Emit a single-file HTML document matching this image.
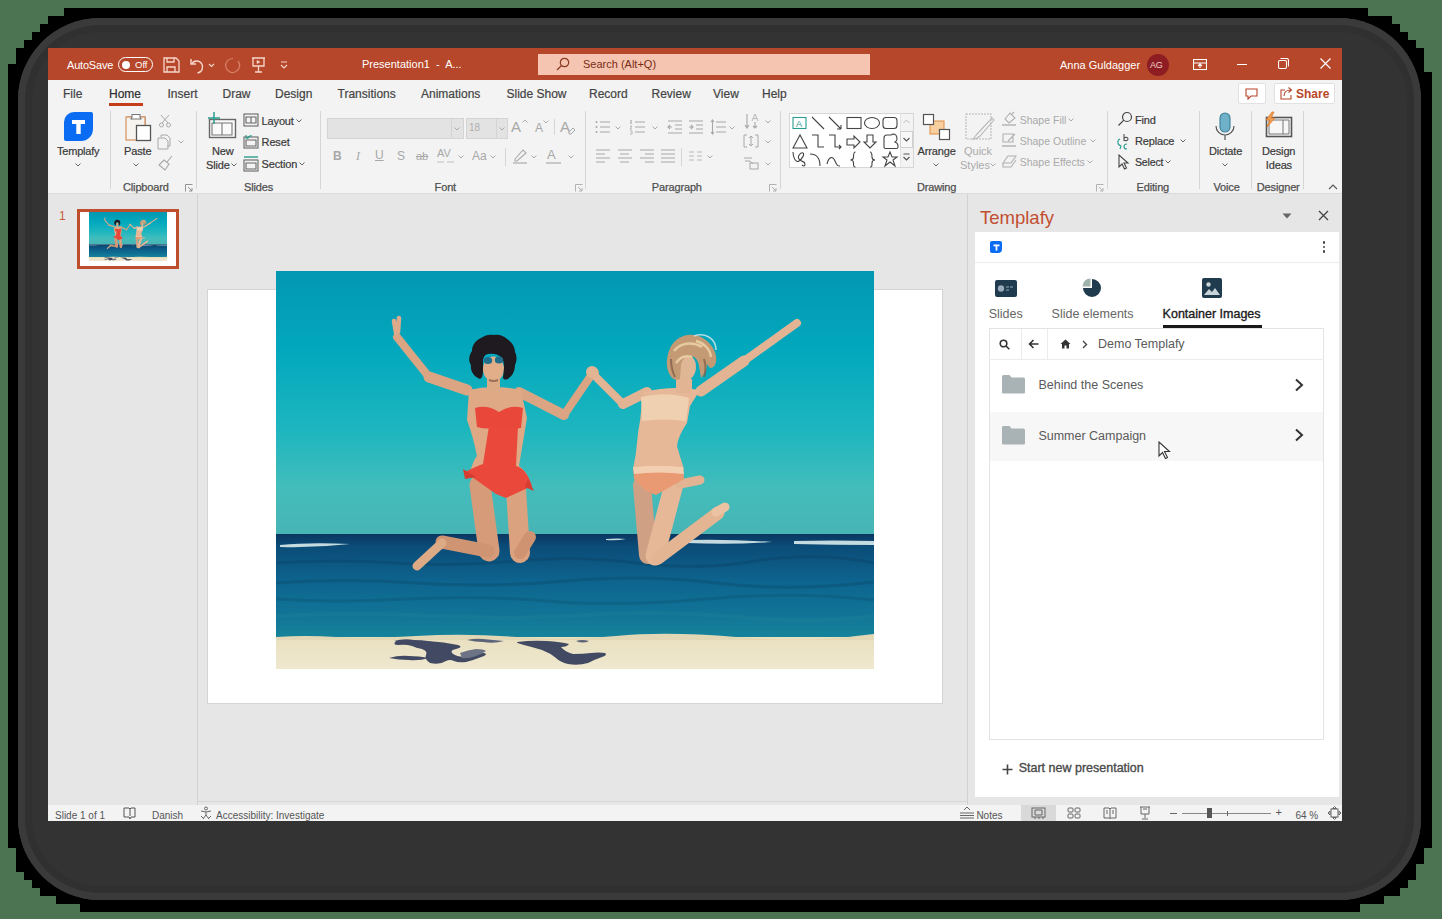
<!DOCTYPE html>
<html><head><meta charset="utf-8">
<style>
*{margin:0;padding:0;box-sizing:border-box}
html,body{width:1442px;height:919px;overflow:hidden;background:#4c7452;font-family:"Liberation Sans",sans-serif}
.a{position:absolute}
.t{position:absolute;white-space:nowrap;line-height:1}
#shadow{position:absolute;left:0;top:0}
#bezel{position:absolute;left:18px;top:18px;width:1403px;height:882px;border-radius:82px;background:#333;box-shadow:inset 0 0 0 7px #3a3a3a,inset 0 0 0 14px #303030}
#win{position:absolute;left:48px;top:48px;width:1294px;height:773px;background:#e6e6e6;overflow:hidden}
#title{position:absolute;left:0;top:0;width:1294px;height:32px;background:#b7472a}
#tabs{position:absolute;left:0;top:32px;width:1294px;height:28px;background:#f3f3f3}
#ribbon{position:absolute;left:0;top:60px;width:1294px;height:86px;background:#f3f3f3;border-bottom:1px solid #dadada}
.tab{color:#444;font-size:12px;-webkit-text-stroke:0.2px #444}
.rl{color:#3a3a3a;font-size:11px;letter-spacing:-0.15px;-webkit-text-stroke:0.2px #3a3a3a}
.gl{color:#505050;font-size:11px;letter-spacing:-0.15px;-webkit-text-stroke:0.25px #505050}
.sep{position:absolute;width:1px;background:#d6d6d6}
</style></head>
<body>
<svg id="shadow" width="1442" height="919"><polygon fill="#000" points="8,64 16,64 16,48 24,48 24,40 32,40 32,32 40,32 40,24 48,24 48,16 64,16 64,8 1368,8 1368,16 1392,16 1392,24 1400,24 1400,32 1408,32 1408,40 1416,40 1416,48 1424,48 1424,72 1432,72 1432,848 1424,848 1424,864 1416,864 1416,880 1408,880 1408,888 1400,888 1400,896 1384,896 1384,904 1360,904 1360,912 80,912 80,904 56,904 56,896 40,896 40,888 32,888 32,880 24,880 24,872 16,872 16,848 8,848"/></svg>
<div id="bezel"></div>
<div id="win">
  <div id="title">
    <div class="t" style="left:19px;top:12px;font-size:11px;color:#fff;letter-spacing:-0.2px">AutoSave</div>
    <div class="a" style="left:70px;top:9px;width:35px;height:15px;border:1.2px solid #fff;border-radius:8px"></div>
    <div class="a" style="left:74px;top:12.5px;width:8px;height:8px;border-radius:50%;background:#fff"></div>
    <div class="t" style="left:87px;top:12px;font-size:9.5px;color:#fff">Off</div>
    <svg class="a" style="left:114px;top:9px" width="18" height="16" viewBox="0 0 18 16" fill="none" stroke="#f6d7cc" stroke-width="1.3"><path d="M2 1h12l3 3v11H2z"/><path d="M5 1v4h7V1"/><path d="M5 15v-5h8v5"/></svg>
    <svg class="a" style="left:141px;top:8px" width="28" height="18" viewBox="0 0 28 18" fill="none" stroke="#f6d7cc" stroke-width="1.4"><path d="M2 3v5h5"/><path d="M2.5 8a6 6 0 1 1 6 9"/><path d="M20 8l2.5 2.5L25 8" stroke-width="1.1"/></svg>
    <svg class="a" style="left:176px;top:9px" width="17" height="17" viewBox="0 0 17 17" fill="none" stroke="#d9806a" stroke-width="1.2"><path d="M14 4a7 7 0 1 1-5-2.5"/></svg>
    <svg class="a" style="left:203px;top:9px" width="15" height="16" viewBox="0 0 15 16" fill="none" stroke="#f6d7cc" stroke-width="1.3"><path d="M1 1h13M2 1v8h11V1M7.5 9v6M4 15h7"/><path d="M6 3.5l3 1.5-3 1.5z" fill="#f6d7cc" stroke-width="0.6"/></svg>
    <svg class="a" style="left:232px;top:13px" width="8" height="8" viewBox="0 0 8 8" fill="none" stroke="#f6d7cc" stroke-width="1.1"><path d="M1 1h6M1 4l3 3 3-3"/></svg>
    <div class="t" style="left:314px;top:11px;font-size:11px;color:#fff">Presentation1&nbsp; -&nbsp; A...</div>
    <div class="a" style="left:490px;top:6px;width:332px;height:21px;background:#f5c5b1"></div>
    <svg class="a" style="left:508px;top:9px" width="14" height="14" viewBox="0 0 14 14" fill="none" stroke="#8a3a22" stroke-width="1.2"><circle cx="8.5" cy="5.5" r="4.2"/><path d="M5.5 8.5L1 13"/></svg>
    <div class="t" style="left:535px;top:11px;font-size:11px;color:#7a2c16">Search (Alt+Q)</div>
    <div class="t" style="left:1012px;top:12px;font-size:11px;color:#fff">Anna Guldagger</div>
    <div class="a" style="left:1099px;top:6px;width:22px;height:22px;border-radius:50%;background:#8d1d22"></div>
    <div class="t" style="left:1102px;top:13px;font-size:9px;color:#f0d0d0;letter-spacing:-0.3px">AG</div>
    <svg class="a" style="left:1145px;top:11px" width="14" height="12" viewBox="0 0 14 12" fill="none" stroke="#fff" stroke-width="1.1"><rect x="0.5" y="0.5" width="13" height="10"/><path d="M0.5 4h13M7 9V5M5 7l2-2 2 2"/></svg>
    <div class="a" style="left:1189px;top:16px;width:10px;height:1px;background:#fff"></div>
    <svg class="a" style="left:1230px;top:10px" width="11" height="11" viewBox="0 0 11 11" fill="none" stroke="#fff" stroke-width="1.1"><rect x="0.5" y="2.5" width="8" height="8" rx="1.5"/><path d="M2.5 0.5h6a2 2 0 0 1 2 2v6"/></svg>
    <svg class="a" style="left:1272px;top:10px" width="11" height="11" viewBox="0 0 11 11" fill="none" stroke="#fff" stroke-width="1.2"><path d="M0.5 0.5l10 10M10.5 0.5l-10 10"/></svg>
  </div>
  <div id="tabs">
    <div class="t tab" style="left:15px;top:7.5px">File</div>
    <div class="t tab" style="left:61px;top:7.5px;color:#262626">Home</div>
    <div class="t tab" style="left:119.5px;top:7.5px">Insert</div>
    <div class="t tab" style="left:174.5px;top:7.5px">Draw</div>
    <div class="t tab" style="left:227px;top:7.5px">Design</div>
    <div class="t tab" style="left:289.5px;top:7.5px">Transitions</div>
    <div class="t tab" style="left:373px;top:7.5px">Animations</div>
    <div class="t tab" style="left:458.5px;top:7.5px">Slide Show</div>
    <div class="t tab" style="left:541px;top:7.5px">Record</div>
    <div class="t tab" style="left:603.5px;top:7.5px">Review</div>
    <div class="t tab" style="left:665px;top:7.5px">View</div>
    <div class="t tab" style="left:714px;top:7.5px">Help</div>
    <div class="a" style="left:61px;top:23px;width:34px;height:2.5px;background:#c43e1c"></div>
    <div class="a" style="left:1190px;top:3px;width:28px;height:21px;background:#fff;border:1px solid #e1e1e1;border-radius:2px"></div>
    <svg class="a" style="left:1197px;top:8px" width="13" height="12" viewBox="0 0 13 12" fill="none" stroke="#b7472a" stroke-width="1.1"><path d="M1 1h11v7H6l-3 3V8H1z"/></svg>
    <div class="a" style="left:1226px;top:3px;width:61px;height:21px;background:#fff;border:1px solid #e1e1e1;border-radius:2px"></div>
    <svg class="a" style="left:1232px;top:7px" width="13" height="13" viewBox="0 0 13 13" fill="none" stroke="#b7472a" stroke-width="1.1"><path d="M5 3H1v9h10V8"/><path d="M4 9c0-4 3-6 7-6M8.5 0.5L11.5 3 8.5 5.5"/></svg>
    <div class="t" style="left:1248px;top:7.5px;font-size:12px;color:#b7472a;font-weight:bold">Share</div>
  </div>
  <div id="ribbon"></div>
</div>
<div id="ov" class="a" style="left:0;top:0;width:1442px;height:919px">
<!-- Templafy -->
<div class="a" style="left:64px;top:112px;width:29px;height:29px;background:#0a6cf2;border-radius:10px 2px 12px 2px"></div>
<svg class="a" style="left:70px;top:118px" width="17" height="17" viewBox="0 0 17 17"><path d="M2 2h13v4h-4.3v10H6.3V6H2z" fill="#fff"/></svg>
<div class="t rl" style="left:57px;top:145.6px;letter-spacing:-0.2px">Templafy</div>
<svg class="a" style="left:75px;top:163px" width="6" height="4" viewBox="0 0 6 4" fill="none" stroke="#666" stroke-width="1"><path d="M0.5 0.5l2.5 2.5 2.5-2.5"/></svg>
<div class="sep" style="left:110px;top:111px;height:78px"></div>
<!-- Clipboard -->
<svg class="a" style="left:124px;top:113px" width="29" height="29" viewBox="0 0 29 29" fill="none"><path d="M3 4h6M15 4h6v8" stroke="#777" stroke-width="1.2"/><rect x="2" y="4" width="19" height="23" fill="#f7f3ef" stroke="#d8925c" stroke-width="1.2"/><path d="M8 4V1.5h8V4l1 2H7z" fill="#fff" stroke="#777" stroke-width="1.1"/><rect x="12.5" y="12.5" width="14" height="15" fill="#fff" stroke="#555" stroke-width="1.3"/></svg>
<div class="t rl" style="left:124px;top:145.6px">Paste</div>
<svg class="a" style="left:133px;top:163px" width="6" height="4" viewBox="0 0 6 4" fill="none" stroke="#666" stroke-width="1"><path d="M0.5 0.5l2.5 2.5 2.5-2.5"/></svg>
<svg class="a" style="left:159px;top:114px" width="12" height="14" viewBox="0 0 12 14" fill="none" stroke="#a8a8a8" stroke-width="1"><path d="M2 1l7 8M10 1L3 9"/><circle cx="2.5" cy="11" r="2"/><circle cx="9.5" cy="11" r="2"/></svg>
<svg class="a" style="left:157px;top:134px" width="16" height="16" viewBox="0 0 16 16" fill="none" stroke="#a8a8a8" stroke-width="1"><path d="M4 3V1h6l3 3v8h-3"/><path d="M1 4h7l3 3v8H1z"/></svg>
<svg class="a" style="left:178px;top:140px" width="6" height="4" viewBox="0 0 6 4" fill="none" stroke="#aaa" stroke-width="1"><path d="M0.5 0.5l2.5 2.5 2.5-2.5"/></svg>
<svg class="a" style="left:158px;top:155px" width="15" height="16" viewBox="0 0 15 16" fill="none" stroke="#a8a8a8" stroke-width="1.1"><path d="M9 7l5-6M6 5l5 4-4 6-6-5z"/></svg>
<div class="t gl" style="left:123px;top:181.6px">Clipboard</div>
<svg class="a" style="left:185px;top:184px" width="8" height="8" viewBox="0 0 8 8" fill="none" stroke="#888" stroke-width="0.9"><path d="M0.5 7.5V0.5h7M3 3l4 4M4 7h3V4"/></svg>
<div class="sep" style="left:196px;top:111px;height:78px"></div>
<!-- Slides -->
<svg class="a" style="left:207px;top:111px" width="30" height="28" viewBox="0 0 30 28" fill="none"><rect x="2.5" y="8.5" width="26" height="18" stroke="#666" stroke-width="1.4" fill="#fafafa"/><path d="M5 12h20v12H5z M15 12v12" stroke="#777" stroke-width="1.1"/><path d="M7 1v12M1 7h12" stroke="#2a9d8f" stroke-width="1.5"/></svg>
<div class="t rl" style="left:212px;top:146.2px">New</div>
<div class="t rl" style="left:206px;top:159.6px">Slide</div>
<svg class="a" style="left:231px;top:163px" width="6" height="4" viewBox="0 0 6 4" fill="none" stroke="#666" stroke-width="1"><path d="M0.5 0.5l2.5 2.5 2.5-2.5"/></svg>
<svg class="a" style="left:243px;top:113px" width="16" height="14" viewBox="0 0 16 14" fill="none" stroke="#666" stroke-width="1.1"><rect x="1" y="1" width="14" height="12"/><path d="M3 4h10v6H3zM8 4v6"/></svg>
<div class="t rl" style="left:261.6px;top:116px">Layout</div>
<svg class="a" style="left:296px;top:119px" width="6" height="4" viewBox="0 0 6 4" fill="none" stroke="#666" stroke-width="1"><path d="M0.5 0.5l2.5 2.5 2.5-2.5"/></svg>
<svg class="a" style="left:243px;top:134px" width="16" height="15" viewBox="0 0 16 15" fill="none" stroke="#666" stroke-width="1.1"><rect x="1" y="3" width="14" height="11"/><path d="M3 6h10v6H3z"/><path d="M4 5a4 4 0 0 1 5-3M3 1v3h3" stroke="#2a9d8f"/></svg>
<div class="t rl" style="left:261.6px;top:137.4px">Reset</div>
<svg class="a" style="left:243px;top:156px" width="16" height="16" viewBox="0 0 16 16" fill="none" stroke="#666" stroke-width="1.1"><path d="M1 1h14" stroke="#2a9d8f" stroke-width="1.4"/><rect x="1" y="4" width="14" height="11"/><path d="M3 7h10v6H3z"/></svg>
<div class="t rl" style="left:261.6px;top:158.6px">Section</div>
<svg class="a" style="left:299px;top:162px" width="6" height="4" viewBox="0 0 6 4" fill="none" stroke="#666" stroke-width="1"><path d="M0.5 0.5l2.5 2.5 2.5-2.5"/></svg>
<div class="t gl" style="left:244px;top:181.6px">Slides</div>
<div class="sep" style="left:320px;top:111px;height:78px"></div>
<!-- Font -->
<div class="a" style="left:327px;top:118px;width:137px;height:21px;background:#e3e3e3;border:1px solid #d4d4d4"></div>
<div class="a" style="left:451px;top:119px;width:1px;height:19px;background:#d4d4d4"></div>
<svg class="a" style="left:454px;top:127px" width="6" height="4" viewBox="0 0 6 4" fill="none" stroke="#aaa" stroke-width="1"><path d="M0.5 0.5l2.5 2.5 2.5-2.5"/></svg>
<div class="a" style="left:466px;top:118px;width:42px;height:21px;background:#e3e3e3;border:1px solid #d4d4d4"></div>
<div class="a" style="left:496px;top:119px;width:1px;height:19px;background:#d4d4d4"></div>
<div class="t" style="left:469px;top:123px;font-size:10px;color:#b0b0b0">18</div>
<svg class="a" style="left:499px;top:127px" width="6" height="4" viewBox="0 0 6 4" fill="none" stroke="#aaa" stroke-width="1"><path d="M0.5 0.5l2.5 2.5 2.5-2.5"/></svg>
<div class="t" style="left:511px;top:119px;font-size:15px;color:#a8a8a8">A</div>
<svg class="a" style="left:522px;top:119px" width="6" height="4" viewBox="0 0 6 4" fill="none" stroke="#aaa" stroke-width="0.9"><path d="M0.5 3.5l2.5-2.5 2.5 2.5"/></svg>
<div class="t" style="left:535px;top:122px;font-size:12px;color:#a8a8a8">A</div>
<svg class="a" style="left:543px;top:120px" width="6" height="4" viewBox="0 0 6 4" fill="none" stroke="#aaa" stroke-width="0.9"><path d="M0.5 0.5l2.5 2.5 2.5-2.5"/></svg>
<div class="sep" style="left:554px;top:119px;height:16px"></div>
<div class="t" style="left:560px;top:119px;font-size:15px;color:#a8a8a8">A</div>
<svg class="a" style="left:568px;top:127px" width="8" height="8" viewBox="0 0 8 8" fill="none" stroke="#aaa" stroke-width="1"><path d="M1 5l4-4 2 2-4 4H1z"/></svg>
<div class="t" style="left:333px;top:150px;font-size:12px;color:#a8a8a8;font-weight:bold">B</div>
<div class="t" style="left:356px;top:150px;font-size:12px;color:#a8a8a8;font-style:italic;font-family:'Liberation Serif',serif">I</div>
<div class="t" style="left:375px;top:149px;font-size:12px;color:#a8a8a8;text-decoration:underline">U</div>
<div class="t" style="left:397px;top:150px;font-size:12px;color:#a8a8a8">S</div>
<div class="t" style="left:416px;top:151px;font-size:11px;color:#a8a8a8;text-decoration:line-through">ab</div>
<div class="t" style="left:437px;top:148px;font-size:11px;color:#a8a8a8">AV</div>
<svg class="a" style="left:437px;top:160px" width="17" height="4" viewBox="0 0 17 4" fill="none" stroke="#aaa" stroke-width="0.7"><path d="M0 2h7M10 2h7"/></svg>
<svg class="a" style="left:458px;top:155px" width="6" height="4" viewBox="0 0 6 4" fill="none" stroke="#aaa" stroke-width="1"><path d="M0.5 0.5l2.5 2.5 2.5-2.5"/></svg>
<div class="t" style="left:472px;top:150px;font-size:12px;color:#a8a8a8">Aa</div>
<svg class="a" style="left:490px;top:155px" width="6" height="4" viewBox="0 0 6 4" fill="none" stroke="#aaa" stroke-width="1"><path d="M0.5 0.5l2.5 2.5 2.5-2.5"/></svg>
<div class="sep" style="left:505px;top:148px;height:18px"></div>
<svg class="a" style="left:512px;top:148px" width="16" height="16" viewBox="0 0 16 16" fill="none" stroke="#aaa" stroke-width="1.1"><path d="M3 11l8-9 3 3-9 8H3z"/><path d="M1 15h14" stroke-width="2" stroke="#c8c8c8"/></svg>
<svg class="a" style="left:531px;top:155px" width="6" height="4" viewBox="0 0 6 4" fill="none" stroke="#aaa" stroke-width="1"><path d="M0.5 0.5l2.5 2.5 2.5-2.5"/></svg>
<div class="t" style="left:547px;top:148px;font-size:13px;color:#a8a8a8">A</div>
<div class="a" style="left:546px;top:162px;width:15px;height:2px;background:#c8c8c8"></div>
<svg class="a" style="left:568px;top:155px" width="6" height="4" viewBox="0 0 6 4" fill="none" stroke="#aaa" stroke-width="1"><path d="M0.5 0.5l2.5 2.5 2.5-2.5"/></svg>
<div class="t gl" style="left:434.6px;top:181.6px">Font</div>
<svg class="a" style="left:575px;top:184px" width="8" height="8" viewBox="0 0 8 8" fill="none" stroke="#aaa" stroke-width="0.9"><path d="M0.5 7.5V0.5h7M3 3l4 4M4 7h3V4"/></svg>
<div class="sep" style="left:585px;top:111px;height:78px"></div>
<!-- Paragraph -->
<svg class="a" style="left:595px;top:119px" width="15" height="16" viewBox="0 0 15 16" fill="none" stroke="#a8a8a8" stroke-width="1.2"><path d="M5 3h10M5 8h10M5 13h10"/><circle cx="1.5" cy="3" r="1" fill="#a8a8a8" stroke="none"/><circle cx="1.5" cy="8" r="1" fill="#a8a8a8" stroke="none"/><circle cx="1.5" cy="13" r="1" fill="#a8a8a8" stroke="none"/></svg>
<svg class="a" style="left:615px;top:126px" width="6" height="4" viewBox="0 0 6 4" fill="none" stroke="#aaa" stroke-width="1"><path d="M0.5 0.5l2.5 2.5 2.5-2.5"/></svg>
<svg class="a" style="left:629px;top:119px" width="16" height="16" viewBox="0 0 16 16" fill="none" stroke="#a8a8a8" stroke-width="1.2"><path d="M6 3h10M6 8h10M6 13h10M2 1v4" /><path d="M1 7h2l-2 3h2M1 12h2v3H1" stroke-width="0.8"/></svg>
<svg class="a" style="left:652px;top:126px" width="6" height="4" viewBox="0 0 6 4" fill="none" stroke="#aaa" stroke-width="1"><path d="M0.5 0.5l2.5 2.5 2.5-2.5"/></svg>
<svg class="a" style="left:667px;top:119px" width="15" height="16" viewBox="0 0 15 16" fill="none" stroke="#a8a8a8" stroke-width="1.1"><path d="M1 2h14M8 6h7M8 10h7M1 14h14M5 8H1M3 6L1 8l2 2"/></svg>
<svg class="a" style="left:688px;top:119px" width="15" height="16" viewBox="0 0 15 16" fill="none" stroke="#a8a8a8" stroke-width="1.1"><path d="M1 2h14M8 6h7M8 10h7M1 14h14M1 8h4M3 6l2 2-2 2"/></svg>
<svg class="a" style="left:710px;top:119px" width="16" height="16" viewBox="0 0 16 16" fill="none" stroke="#a8a8a8" stroke-width="1.1"><path d="M6 3h10M6 8h10M6 13h10M2.5 1v14M1 3l1.5-2L4 3M1 13l1.5 2L4 13"/></svg>
<svg class="a" style="left:729px;top:126px" width="6" height="4" viewBox="0 0 6 4" fill="none" stroke="#aaa" stroke-width="1"><path d="M0.5 0.5l2.5 2.5 2.5-2.5"/></svg>
<svg class="a" style="left:744px;top:113px" width="16" height="16" viewBox="0 0 16 16" fill="none" stroke="#a8a8a8" stroke-width="1.1"><path d="M3 1v14M1 12l2 3 2-3M11 15V9M9 13l2 2 2-2"/><path d="M8 8l3-7 3 7M9 5.5h4" stroke-width="0.8"/></svg>
<svg class="a" style="left:765px;top:120px" width="6" height="4" viewBox="0 0 6 4" fill="none" stroke="#aaa" stroke-width="1"><path d="M0.5 0.5l2.5 2.5 2.5-2.5"/></svg>
<svg class="a" style="left:595px;top:148px" width="15" height="15" viewBox="0 0 15 15" fill="none" stroke="#a8a8a8" stroke-width="1.2"><path d="M1 2h14M1 6h9M1 10h14M1 14h9"/></svg>
<svg class="a" style="left:617px;top:148px" width="15" height="15" viewBox="0 0 15 15" fill="none" stroke="#a8a8a8" stroke-width="1.2"><path d="M1 2h14M3 6h9M1 10h14M3 14h9"/></svg>
<svg class="a" style="left:639px;top:148px" width="15" height="15" viewBox="0 0 15 15" fill="none" stroke="#a8a8a8" stroke-width="1.2"><path d="M1 2h14M6 6h9M1 10h14M6 14h9"/></svg>
<svg class="a" style="left:660px;top:148px" width="15" height="15" viewBox="0 0 15 15" fill="none" stroke="#a8a8a8" stroke-width="1.2"><path d="M1 2h14M1 6h14M1 10h14M1 14h14"/></svg>
<div class="sep" style="left:681px;top:148px;height:18px"></div>
<svg class="a" style="left:689px;top:151px" width="13" height="10" viewBox="0 0 13 10" fill="none" stroke="#b8b8b8" stroke-width="1"><path d="M0 1h5M8 1h5M0 5h5M8 5h5M0 9h5M8 9h5"/></svg>
<svg class="a" style="left:707px;top:155px" width="6" height="4" viewBox="0 0 6 4" fill="none" stroke="#aaa" stroke-width="1"><path d="M0.5 0.5l2.5 2.5 2.5-2.5"/></svg>
<svg class="a" style="left:743px;top:134px" width="16" height="14" viewBox="0 0 16 14" fill="none" stroke="#a8a8a8" stroke-width="1"><path d="M4 1H1v12h3M12 1h3v12h-3M8 2v10M6 4l2-2 2 2M6 10l2 2 2-2"/></svg>
<svg class="a" style="left:765px;top:140px" width="6" height="4" viewBox="0 0 6 4" fill="none" stroke="#aaa" stroke-width="1"><path d="M0.5 0.5l2.5 2.5 2.5-2.5"/></svg>
<svg class="a" style="left:743px;top:156px" width="16" height="14" viewBox="0 0 16 14" fill="none" stroke="#a8a8a8" stroke-width="1"><path d="M1 2h8M2 5h5l3 3"/><rect x="7" y="7" width="8" height="6"/></svg>
<svg class="a" style="left:765px;top:162px" width="6" height="4" viewBox="0 0 6 4" fill="none" stroke="#aaa" stroke-width="1"><path d="M0.5 0.5l2.5 2.5 2.5-2.5"/></svg>
<div class="t gl" style="left:651.8px;top:181.6px">Paragraph</div>
<svg class="a" style="left:769px;top:184px" width="8" height="8" viewBox="0 0 8 8" fill="none" stroke="#aaa" stroke-width="0.9"><path d="M0.5 7.5V0.5h7M3 3l4 4M4 7h3V4"/></svg>
<div class="sep" style="left:780px;top:111px;height:78px"></div>
<!-- Drawing -->
<div class="a" style="left:789px;top:113px;width:125px;height:55px;background:#fff;border:1px solid #d6d6d6"></div>
<div class="a" style="left:900px;top:114px;width:13px;height:53px;background:#f3f3f3;border-left:1px solid #e3e3e3"></div>
<div class="a" style="left:900px;top:131px;width:13px;height:17px;border:1px solid #d0d0d0;background:#f8f8f8"></div>
<svg class="a" style="left:790px;top:114px" width="110" height="54" viewBox="0 0 110 54" fill="none" stroke="#444" stroke-width="1.1">
<rect x="3" y="3.5" width="13" height="11" stroke="#2a9d8f"/><text x="6" y="13" font-size="9" font-family="Liberation Sans" fill="#2a9d8f" stroke="none">A</text>
<path d="M22 3l12 12M39 3l12 12M51 15v-4M51 15h-4"/>
<rect x="57" y="3.5" width="14" height="11"/><ellipse cx="82" cy="9" rx="7.5" ry="5.5"/><rect x="93" y="3.5" width="14" height="11" rx="3"/>
<path d="M3 34l7-13 7 13z"/><path d="M22 21h6v12h6M39 21h6v12h6M49 31l2 2-2 2"/><path d="M57 25h7v-3l6 6-6 6v-3h-7z"/><path d="M77 21h6v7h3l-6 6-6-6h3z"/><path d="M94 24q0-3 3-3h4l2-1q4 0 4 5 0 2-2 3 3 1 3 4v1q0 1.5-1.5 1.5h-11q-1.5 0-1.5-1.5z"/>
<path d="M3 38c0 6 3 11 6 9s6-7 4-8-6 3-4 6 6 2 6 5-2 2-3 1M20 40c6 0 10 4 10 12M37 50c2-8 6-8 8-3s3 5 5 5"/><path d="M65.5 38c-2 0-2 2-2 5s-2 3-3 3c1 0 3 0 3 3s0 4 2 4M80 38c2 0 2 2 2 5s2 3 3 3c-1 0-3 0-3 3s0 4-2 4"/><path d="M100 38l2 5h5l-4 3 2 6-5-4-5 4 2-6-4-3h5z"/>
</svg>
<svg class="a" style="left:903px;top:119px" width="7" height="5" viewBox="0 0 7 5" fill="none" stroke="#bbb" stroke-width="1"><path d="M0.5 4l3-3 3 3"/></svg>
<svg class="a" style="left:903px;top:137px" width="7" height="5" viewBox="0 0 7 5" fill="none" stroke="#555" stroke-width="1.1"><path d="M0.5 1l3 3 3-3"/></svg>
<svg class="a" style="left:903px;top:153px" width="7" height="9" viewBox="0 0 7 9" fill="none" stroke="#555" stroke-width="1.1"><path d="M0.5 1h6M0.5 4l3 3 3-3"/></svg>
<svg class="a" style="left:922px;top:113px" width="30" height="28" viewBox="0 0 30 28" fill="none"><rect x="8" y="8" width="14" height="13" fill="#f8cf9e" stroke="#e09650" stroke-width="1.1"/><rect x="1.5" y="1.5" width="10" height="10" fill="#fff" stroke="#555" stroke-width="1.2"/><rect x="17.5" y="16.5" width="10" height="10" fill="#fff" stroke="#555" stroke-width="1.2"/></svg>
<div class="t rl" style="left:917.6px;top:145.6px">Arrange</div>
<svg class="a" style="left:933px;top:163px" width="6" height="4" viewBox="0 0 6 4" fill="none" stroke="#666" stroke-width="1"><path d="M0.5 0.5l2.5 2.5 2.5-2.5"/></svg>
<svg class="a" style="left:964px;top:112px" width="32" height="30" viewBox="0 0 32 30" fill="none" stroke="#b8b8b8" stroke-width="1.1"><path d="M2 2h25v25H2z" stroke-dasharray="2 1"/><path d="M30 8L16 24c-2 2-5 3-7 3 2-2 3-4 5-6L28 6z"/></svg>
<div class="t" style="left:964px;top:145.6px;font-size:11px;color:#aaa">Quick</div>
<div class="t" style="left:960px;top:159.6px;font-size:11px;color:#aaa">Styles</div>
<svg class="a" style="left:990px;top:163px" width="6" height="4" viewBox="0 0 6 4" fill="none" stroke="#aaa" stroke-width="1"><path d="M0.5 0.5l2.5 2.5 2.5-2.5"/></svg>
<svg class="a" style="left:1001px;top:111px" width="16" height="16" viewBox="0 0 16 16" fill="none" stroke="#b0b0b0" stroke-width="1.1"><path d="M4 8l5-6 5 5-6 5z M11 3l2-2"/><path d="M1 14h14" stroke-width="2" stroke="#c4c4c4"/></svg>
<div class="t" style="left:1019.7px;top:115px;font-size:10.5px;color:#aaa">Shape Fill</div>
<svg class="a" style="left:1068px;top:118px" width="6" height="4" viewBox="0 0 6 4" fill="none" stroke="#aaa" stroke-width="1"><path d="M0.5 0.5l2.5 2.5 2.5-2.5"/></svg>
<svg class="a" style="left:1001px;top:132px" width="16" height="16" viewBox="0 0 16 16" fill="none" stroke="#b0b0b0" stroke-width="1.1"><path d="M2 2h10v8H2z M7 9l7-7"/><path d="M1 14h14" stroke-width="2" stroke="#c4c4c4"/></svg>
<div class="t" style="left:1019.7px;top:136px;font-size:10.5px;color:#aaa">Shape Outline</div>
<svg class="a" style="left:1090px;top:139px" width="6" height="4" viewBox="0 0 6 4" fill="none" stroke="#aaa" stroke-width="1"><path d="M0.5 0.5l2.5 2.5 2.5-2.5"/></svg>
<svg class="a" style="left:1001px;top:154px" width="16" height="15" viewBox="0 0 16 15" fill="none" stroke="#b0b0b0" stroke-width="1.1"><path d="M2 9l5-7h8l-5 7z M2 9v4h8l5-7"/></svg>
<div class="t" style="left:1019.7px;top:157px;font-size:10.5px;color:#aaa">Shape Effects</div>
<svg class="a" style="left:1087px;top:160px" width="6" height="4" viewBox="0 0 6 4" fill="none" stroke="#aaa" stroke-width="1"><path d="M0.5 0.5l2.5 2.5 2.5-2.5"/></svg>
<div class="t gl" style="left:917px;top:181.6px">Drawing</div>
<svg class="a" style="left:1096px;top:184px" width="8" height="8" viewBox="0 0 8 8" fill="none" stroke="#aaa" stroke-width="0.9"><path d="M0.5 7.5V0.5h7M3 3l4 4M4 7h3V4"/></svg>
<div class="sep" style="left:1107px;top:111px;height:78px"></div>
<!-- Editing -->
<svg class="a" style="left:1117px;top:111px" width="16" height="16" viewBox="0 0 16 16" fill="none" stroke="#444" stroke-width="1.2"><circle cx="10" cy="6" r="4.5"/><path d="M6.8 9.2L1.5 14.5"/></svg>
<div class="t rl" style="left:1135px;top:114.6px">Find</div>
<svg class="a" style="left:1116px;top:133px" width="16" height="17" viewBox="0 0 16 17" fill="none" stroke="#2a9d8f" stroke-width="1.1"><path d="M4 6c-3 1-3 6 1 7M2 11l3 2-1 3M11 11c-2 0-3 1-3 3s1 2 3 2"/><path d="M8 1v7M8 5c1-1 4-1 4 1s-3 2-4 1" stroke="#555"/></svg>
<div class="t rl" style="left:1135px;top:135.6px">Replace</div>
<svg class="a" style="left:1180px;top:139px" width="6" height="4" viewBox="0 0 6 4" fill="none" stroke="#666" stroke-width="1"><path d="M0.5 0.5l2.5 2.5 2.5-2.5"/></svg>
<svg class="a" style="left:1118px;top:154px" width="12" height="16" viewBox="0 0 12 16" fill="none" stroke="#444" stroke-width="1.1"><path d="M1 1v12l3-3 2.5 5 2-1-2.5-5h4z"/></svg>
<div class="t rl" style="left:1135px;top:156.6px;font-size:10.5px">Select</div>
<svg class="a" style="left:1165px;top:160px" width="6" height="4" viewBox="0 0 6 4" fill="none" stroke="#666" stroke-width="1"><path d="M0.5 0.5l2.5 2.5 2.5-2.5"/></svg>
<div class="t gl" style="left:1136.5px;top:181.6px">Editing</div>
<div class="sep" style="left:1199px;top:111px;height:78px"></div>
<!-- Voice -->
<svg class="a" style="left:1214px;top:112px" width="22" height="29" viewBox="0 0 22 29" fill="none"><rect x="6" y="1" width="10" height="19" rx="5" fill="#6fb1c8" stroke="#3b7f99" stroke-width="1.1"/><path d="M2 14a9 9 0 0 0 18 0M11 23v5" stroke="#555" stroke-width="1.2"/></svg>
<div class="t rl" style="left:1209px;top:145.6px">Dictate</div>
<svg class="a" style="left:1222px;top:163px" width="6" height="4" viewBox="0 0 6 4" fill="none" stroke="#666" stroke-width="1"><path d="M0.5 0.5l2.5 2.5 2.5-2.5"/></svg>
<div class="t gl" style="left:1213.5px;top:181.6px">Voice</div>
<div class="sep" style="left:1251px;top:111px;height:78px"></div>
<!-- Designer -->
<svg class="a" style="left:1263px;top:111px" width="30" height="27" viewBox="0 0 30 27" fill="none"><rect x="3.5" y="6.5" width="25" height="19" stroke="#555" stroke-width="1.6" fill="#f7f7f7"/><path d="M6 9h20v14H6zM20 9v14" stroke="#777" stroke-width="1"/><path d="M9 1L3 9h4l-3 7 8-9H8l3-6z" fill="#f0a050" stroke="#e07a30" stroke-width="0.8"/></svg>
<div class="t rl" style="left:1262px;top:146.2px">Design</div>
<div class="t rl" style="left:1265.8px;top:160px">Ideas</div>
<div class="t gl" style="left:1256.8px;top:181.6px">Designer</div>
<div class="sep" style="left:1303px;top:111px;height:78px"></div>
<!-- main area -->
<div class="a" style="left:197px;top:194px;width:1px;height:611px;background:#d2d2d2"></div>
<div class="a" style="left:198px;top:801px;width:769px;height:1px;background:#d6d6d6"></div>
<div class="a" style="left:967px;top:194px;width:1px;height:611px;background:#d2d2d2"></div>
<div class="t" style="left:59px;top:210px;font-size:12px;color:#c65a38">1</div>
<div class="a" style="left:77px;top:209px;width:102px;height:60px;border:3px solid #bf4e2c;background:#fff"></div>
<div id="thumb" class="a" style="left:89px;top:212px;width:78px;height:49px;overflow:hidden"><svg width="78" height="49" preserveAspectRatio="none" viewBox="0 0 598 398" style="position:absolute;left:0;top:0">
<defs>
<linearGradient id="sky2" x1="0" y1="0" x2="0" y2="1">
<stop offset="0" stop-color="#0397b2"/><stop offset="0.3" stop-color="#02a8bd"/><stop offset="0.6" stop-color="#1db6bf"/><stop offset="0.82" stop-color="#42bdbb"/><stop offset="1" stop-color="#48b4b5"/>
</linearGradient>
<linearGradient id="sea2" x1="0" y1="0" x2="0" y2="1">
<stop offset="0" stop-color="#0a3760"/><stop offset="0.12" stop-color="#0b4c78"/><stop offset="0.45" stop-color="#0d648e"/><stop offset="0.8" stop-color="#117698"/><stop offset="1" stop-color="#16849a"/>
</linearGradient>
<linearGradient id="sand2" x1="0" y1="0" x2="0" y2="1">
<stop offset="0" stop-color="#e9e0c0"/><stop offset="1" stop-color="#efe8cf"/>
</linearGradient>
</defs>
<rect x="0" y="0" width="598" height="264" fill="url(#sky2)"/>
<rect x="0" y="263" width="598" height="104" fill="url(#sea2)"/>
<path d="M4 274q30-3 70-1q-35 4-70 3z M410 269q45-1 86 2q-40 3-86 1z M518 270q40-1 80 0v4q-40 0-80-1z M330 268q12-1 20 0-10 2-20 1z" fill="#d8ebec" opacity="0.9"/>
<g fill="none" stroke-width="3" opacity="0.45">
<path d="M0 292q60-4 120 0t120-2 120 2 120-2 118 2" stroke="#0a4468"/>
<path d="M0 312q70-5 140 0t150-2 150 2 158-1" stroke="#0b4d70"/>
<path d="M0 328q60 4 130 0t140 2 160-2 168 1" stroke="#0c5878"/>
<path d="M0 345q80-4 160 0t150-1 150 2 138-1" stroke="#1a8096" stroke-width="4"/>
</g>
<rect x="0" y="366" width="598" height="32" fill="url(#sand2)"/>
<path d="M0 366q30-2 60 0t80-1 100 1 100-1 120 1 120-1 118 1v3H0z" fill="#e2d8b6"/>
<path d="M118 370q10-3 20-1 8 0 14 1 16 1 30 4 6 2-2 4-6 1-4 4 4 4 14 4 10-4 18-4 4 1 0 3-10 4-18 6-8 1-12-1-4-2-8 0-6 4-16 2-6-4-4-8 2-4-4-6-6-1-10-3-6-2-14-1-6 0-2-4z" fill="#414a62"/>
<path d="M184 382q8-3 16-4 8 0 10 2-4 3-10 5-8 3-14 2z" fill="#6b7384"/>
<path d="M113 387q10-3 20-2 10 0 20 2-10 3-20 2-10 0-20-2z" fill="#414a62"/>
<path d="M191 369q8-2 16-1 10 1 21 2-10 3-21 1-8 0-16-2z" fill="#5a6378"/>
<path d="M241 371q15-2 30-1 14 1 22 3-2 3-8 3 4 5 12 7 10 0 18-1 8-1 14 0 3 2-3 4-6 2-14 6-10 3-20 1-8-2-12-6-6-5-14-8-10-3-18-5-8-2-7-3z" fill="#414a62"/>
<path d="M300 370q6-2 13 0-6 3-13 0z" fill="#5a6378"/>
<!-- woman 1 -->
<g stroke-linecap="round" stroke-linejoin="round" fill="none">
<path d="M121 66l32 40" stroke="#dba583" stroke-width="8"/>
<path d="M153 106l38 13" stroke="#dba583" stroke-width="11"/>
<path d="M118 50l2 12M123 47l-1 14" stroke="#dfaa8a" stroke-width="4.5"/>
<path d="M243 121l45 23" stroke="#dba583" stroke-width="10"/>
<path d="M288 144l26-38" stroke="#dba583" stroke-width="8"/>
<path d="M204 214l9 66" stroke="#d69c7a" stroke-width="21"/>
<path d="M212 280l-46-9" stroke="#cf9573" stroke-width="13"/>
<path d="M166 272l-25 23" stroke="#ddaa86" stroke-width="9"/>
<path d="M240 218l4 64" stroke="#dba27f" stroke-width="20"/>
<path d="M244 282l10-16" stroke="#cf9371" stroke-width="12"/>
</g>
<circle cx="317" cy="102" r="6" fill="#dfa985"/>
<path d="M193 119q24-6 52 0l6 28-8 48q8 6 10 14l-60-4q4-16 8-20-4-20-10-36z" fill="#dfa985"/>
<path d="M211 108h13v14h-13z" fill="#ddaa86"/>
<ellipse cx="217.5" cy="98" rx="10.5" ry="12.5" fill="#e2ae89"/>
<path d="M204 108c-6-2-10-8-9-14-3-4-2-10 1-14 0-6 4-11 9-13 4-3 9-4 13-3 5-1 10 1 13 4 5 3 8 8 8 13 2 4 2 9 0 13 0 5-2 10-6 13-2 2-5 2-6 0l1-10c0-6-1-9-3-11-3-3-8-4-13-3-4 1-5 4-5 8v9c0 4-1 7-3 8z" fill="#1e1a20"/>
<ellipse cx="212" cy="89.5" rx="4.2" ry="3.5" fill="#1f6f8c"/><ellipse cx="223" cy="89" rx="4.2" ry="3.5" fill="#1f6f8c"/>
<path d="M213 109q5 2 9 0" stroke="#6a4a3a" stroke-width="2" fill="none" opacity="0.6"/>
<path d="M199 137q12-4 24 4 12-8 24-4l-2 20q-10 2-22-1-12 3-22 0z" fill="#e8473a"/>
<path d="M213 155h29l-2 40q10 2 16 20l-26 12-10-4-31-22q12-6 18-8z" fill="#e9483b"/>
<path d="M187 198l13 8-11 2z M252 208l6 12-9-4z" fill="#d63c30"/>
<!-- woman 2 -->
<g stroke-linecap="round" stroke-linejoin="round" fill="none">
<path d="M318 104l29 29" stroke="#e2b494" stroke-width="8"/>
<path d="M347 133l24-12" stroke="#e2b494" stroke-width="10"/>
<path d="M425 120l43-30" stroke="#e2b494" stroke-width="11"/>
<path d="M468 90l53-38" stroke="#e2b494" stroke-width="8"/>
<path d="M366 214l6 70" stroke="#cfa083" stroke-width="18"/>
<path d="M398 213l-19 72" stroke="#e6b898" stroke-width="19"/>
<path d="M382 287l60-45" stroke="#e4b592" stroke-width="13"/>
<path d="M440 241l9-5" stroke="#ebc2a2" stroke-width="9"/>
<path d="M404 213l20-4" stroke="#e2b494" stroke-width="9"/>
</g>
<circle cx="316" cy="101" r="6" fill="#e2b494"/>
<path d="M368 121Q396 114 424 119L414 135 411 152Q402 165 401 175 404 186 408 198L357 198Q360 185 361 172 362 160 364 150L366 132Z" fill="#e6b898"/>
<path d="M365 126Q390 120 413 127L410 150Q388 147 366 150Z" fill="#efd0b0"/>
<path d="M357 196q25-3 50 0l1 12-28 16-10-4-12-12z" fill="#e99a73"/>
<path d="M357 196q25-3 50 0l1 7q-25-3-50 0z" fill="#f1cfb0"/>
<path d="M400 108h16v14h-16z" fill="#e2b494"/>
<ellipse cx="408" cy="96" rx="12" ry="14" fill="#dfb797"/>
<path d="M394 104c-4-6-4-16-1-24 3-9 10-15 19-16 9-1 17 3 22 9 5 6 7 12 6 18-1 4-3 6-6 6l-3-4c0 5-2 10-6 14l-2-12c-1-6-4-10-9-10s-8 4-9 9l-1 14c-4 2-8 0-10-4z" fill="#c49a74"/>
<path d="M398 80c6-8 18-10 28-4M400 92c4-6 10-8 16-6M420 70c8 2 14 8 15 16" stroke="#e6cba0" stroke-width="2.5" fill="none"/>
<path d="M395 88c0 8 2 14 4 18M428 88c2 6 2 12 0 18" stroke="#7a5a44" stroke-width="2" fill="none" opacity="0.7"/>
<path d="M418 65c10-4 22 2 22 14" stroke="#d8e8ea" stroke-width="1.5" fill="none" opacity="0.8"/>
</svg></div>
<div class="a" style="left:208px;top:290px;width:734px;height:413px;background:#fff;box-shadow:0 0 0 1px #d4d4d4"></div>
<div id="photo" class="a" style="left:276px;top:271px;width:598px;height:398px;overflow:hidden"><svg width="598" height="398" viewBox="0 0 598 398" style="position:absolute;left:0;top:0">
<defs>
<linearGradient id="sky" x1="0" y1="0" x2="0" y2="1">
<stop offset="0" stop-color="#0397b2"/><stop offset="0.3" stop-color="#02a8bd"/><stop offset="0.6" stop-color="#1db6bf"/><stop offset="0.82" stop-color="#42bdbb"/><stop offset="1" stop-color="#48b4b5"/>
</linearGradient>
<linearGradient id="sea" x1="0" y1="0" x2="0" y2="1">
<stop offset="0" stop-color="#0a3760"/><stop offset="0.12" stop-color="#0b4c78"/><stop offset="0.45" stop-color="#0d648e"/><stop offset="0.8" stop-color="#117698"/><stop offset="1" stop-color="#16849a"/>
</linearGradient>
<linearGradient id="sand" x1="0" y1="0" x2="0" y2="1">
<stop offset="0" stop-color="#e9e0c0"/><stop offset="1" stop-color="#efe8cf"/>
</linearGradient>
</defs>
<rect x="0" y="0" width="598" height="264" fill="url(#sky)"/>
<rect x="0" y="263" width="598" height="104" fill="url(#sea)"/>
<path d="M4 274q30-3 70-1q-35 4-70 3z M410 269q45-1 86 2q-40 3-86 1z M518 270q40-1 80 0v4q-40 0-80-1z M330 268q12-1 20 0-10 2-20 1z" fill="#d8ebec" opacity="0.9"/>
<g fill="none" stroke-width="3" opacity="0.45">
<path d="M0 292q60-4 120 0t120-2 120 2 120-2 118 2" stroke="#0a4468"/>
<path d="M0 312q70-5 140 0t150-2 150 2 158-1" stroke="#0b4d70"/>
<path d="M0 328q60 4 130 0t140 2 160-2 168 1" stroke="#0c5878"/>
<path d="M0 345q80-4 160 0t150-1 150 2 138-1" stroke="#1a8096" stroke-width="4"/>
</g>
<rect x="0" y="366" width="598" height="32" fill="url(#sand)"/>
<path d="M0 366q30-2 60 0t80-1 100 1 100-1 120 1 120-1 118 1v3H0z" fill="#e2d8b6"/>
<path d="M118 370q10-3 20-1 8 0 14 1 16 1 30 4 6 2-2 4-6 1-4 4 4 4 14 4 10-4 18-4 4 1 0 3-10 4-18 6-8 1-12-1-4-2-8 0-6 4-16 2-6-4-4-8 2-4-4-6-6-1-10-3-6-2-14-1-6 0-2-4z" fill="#414a62"/>
<path d="M184 382q8-3 16-4 8 0 10 2-4 3-10 5-8 3-14 2z" fill="#6b7384"/>
<path d="M113 387q10-3 20-2 10 0 20 2-10 3-20 2-10 0-20-2z" fill="#414a62"/>
<path d="M191 369q8-2 16-1 10 1 21 2-10 3-21 1-8 0-16-2z" fill="#5a6378"/>
<path d="M241 371q15-2 30-1 14 1 22 3-2 3-8 3 4 5 12 7 10 0 18-1 8-1 14 0 3 2-3 4-6 2-14 6-10 3-20 1-8-2-12-6-6-5-14-8-10-3-18-5-8-2-7-3z" fill="#414a62"/>
<path d="M300 370q6-2 13 0-6 3-13 0z" fill="#5a6378"/>
<!-- woman 1 -->
<g stroke-linecap="round" stroke-linejoin="round" fill="none">
<path d="M121 66l32 40" stroke="#dba583" stroke-width="8"/>
<path d="M153 106l38 13" stroke="#dba583" stroke-width="11"/>
<path d="M118 50l2 12M123 47l-1 14" stroke="#dfaa8a" stroke-width="4.5"/>
<path d="M243 121l45 23" stroke="#dba583" stroke-width="10"/>
<path d="M288 144l26-38" stroke="#dba583" stroke-width="8"/>
<path d="M204 214l9 66" stroke="#d69c7a" stroke-width="21"/>
<path d="M212 280l-46-9" stroke="#cf9573" stroke-width="13"/>
<path d="M166 272l-25 23" stroke="#ddaa86" stroke-width="9"/>
<path d="M240 218l4 64" stroke="#dba27f" stroke-width="20"/>
<path d="M244 282l10-16" stroke="#cf9371" stroke-width="12"/>
</g>
<circle cx="317" cy="102" r="6" fill="#dfa985"/>
<path d="M193 119q24-6 52 0l6 28-8 48q8 6 10 14l-60-4q4-16 8-20-4-20-10-36z" fill="#dfa985"/>
<path d="M211 108h13v14h-13z" fill="#ddaa86"/>
<ellipse cx="217.5" cy="98" rx="10.5" ry="12.5" fill="#e2ae89"/>
<path d="M204 108c-6-2-10-8-9-14-3-4-2-10 1-14 0-6 4-11 9-13 4-3 9-4 13-3 5-1 10 1 13 4 5 3 8 8 8 13 2 4 2 9 0 13 0 5-2 10-6 13-2 2-5 2-6 0l1-10c0-6-1-9-3-11-3-3-8-4-13-3-4 1-5 4-5 8v9c0 4-1 7-3 8z" fill="#1e1a20"/>
<ellipse cx="212" cy="89.5" rx="4.2" ry="3.5" fill="#1f6f8c"/><ellipse cx="223" cy="89" rx="4.2" ry="3.5" fill="#1f6f8c"/>
<path d="M213 109q5 2 9 0" stroke="#6a4a3a" stroke-width="2" fill="none" opacity="0.6"/>
<path d="M199 137q12-4 24 4 12-8 24-4l-2 20q-10 2-22-1-12 3-22 0z" fill="#e8473a"/>
<path d="M213 155h29l-2 40q10 2 16 20l-26 12-10-4-31-22q12-6 18-8z" fill="#e9483b"/>
<path d="M187 198l13 8-11 2z M252 208l6 12-9-4z" fill="#d63c30"/>
<!-- woman 2 -->
<g stroke-linecap="round" stroke-linejoin="round" fill="none">
<path d="M318 104l29 29" stroke="#e2b494" stroke-width="8"/>
<path d="M347 133l24-12" stroke="#e2b494" stroke-width="10"/>
<path d="M425 120l43-30" stroke="#e2b494" stroke-width="11"/>
<path d="M468 90l53-38" stroke="#e2b494" stroke-width="8"/>
<path d="M366 214l6 70" stroke="#cfa083" stroke-width="18"/>
<path d="M398 213l-19 72" stroke="#e6b898" stroke-width="19"/>
<path d="M382 287l60-45" stroke="#e4b592" stroke-width="13"/>
<path d="M440 241l9-5" stroke="#ebc2a2" stroke-width="9"/>
<path d="M404 213l20-4" stroke="#e2b494" stroke-width="9"/>
</g>
<circle cx="316" cy="101" r="6" fill="#e2b494"/>
<path d="M368 121Q396 114 424 119L414 135 411 152Q402 165 401 175 404 186 408 198L357 198Q360 185 361 172 362 160 364 150L366 132Z" fill="#e6b898"/>
<path d="M365 126Q390 120 413 127L410 150Q388 147 366 150Z" fill="#efd0b0"/>
<path d="M357 196q25-3 50 0l1 12-28 16-10-4-12-12z" fill="#e99a73"/>
<path d="M357 196q25-3 50 0l1 7q-25-3-50 0z" fill="#f1cfb0"/>
<path d="M400 108h16v14h-16z" fill="#e2b494"/>
<ellipse cx="408" cy="96" rx="12" ry="14" fill="#dfb797"/>
<path d="M394 104c-4-6-4-16-1-24 3-9 10-15 19-16 9-1 17 3 22 9 5 6 7 12 6 18-1 4-3 6-6 6l-3-4c0 5-2 10-6 14l-2-12c-1-6-4-10-9-10s-8 4-9 9l-1 14c-4 2-8 0-10-4z" fill="#c49a74"/>
<path d="M398 80c6-8 18-10 28-4M400 92c4-6 10-8 16-6M420 70c8 2 14 8 15 16" stroke="#e6cba0" stroke-width="2.5" fill="none"/>
<path d="M395 88c0 8 2 14 4 18M428 88c2 6 2 12 0 18" stroke="#7a5a44" stroke-width="2" fill="none" opacity="0.7"/>
<path d="M418 65c10-4 22 2 22 14" stroke="#d8e8ea" stroke-width="1.5" fill="none" opacity="0.8"/>
</svg></div>
<!-- status bar -->
<div class="a" style="left:48px;top:805px;width:1294px;height:16px;background:#f3f3f3"></div>
<div class="t" style="left:55px;top:810.5px;font-size:10px;color:#555">Slide 1 of 1</div>
<svg class="a" style="left:123px;top:807px" width="13" height="13" viewBox="0 0 13 13" fill="none" stroke="#555" stroke-width="1"><path d="M1 1h5l1 1 1-1h4v9H8l-1 2-1-2H1z"/><path d="M7 2v7"/></svg>
<div class="t" style="left:152px;top:810.5px;font-size:10px;color:#555">Danish</div>
<svg class="a" style="left:199px;top:806px" width="14" height="14" viewBox="0 0 14 14" fill="none" stroke="#666" stroke-width="1"><circle cx="7" cy="2.5" r="1.5"/><path d="M2 5l5 1 5-1M7 6v3l-3 4M7 9l3 4M2 10l3 3M12 10l-3 3"/></svg>
<div class="t" style="left:216px;top:810.5px;font-size:10px;color:#555">Accessibility: Investigate</div>
<svg class="a" style="left:959px;top:806px" width="16" height="13" viewBox="0 0 16 13" fill="none" stroke="#666" stroke-width="1"><path d="M5 4l3-3 3 3M1 7h14M1 9.5h14M1 12h14"/></svg>
<div class="t" style="left:976.4px;top:810.5px;font-size:10px;color:#555">Notes</div>
<div class="a" style="left:1021px;top:805px;width:35px;height:16px;background:#d9d9d9"></div>
<svg class="a" style="left:1031px;top:807px" width="15" height="12" viewBox="0 0 15 12" fill="none" stroke="#666" stroke-width="1"><rect x="1" y="1" width="13" height="9"/><path d="M4 3h7v5H4zM3 11h2M7 11h2M11 11h2"/></svg>
<svg class="a" style="left:1067px;top:807px" width="14" height="12" viewBox="0 0 14 12" fill="none" stroke="#666" stroke-width="1"><rect x="1" y="1" width="5" height="4" rx="1"/><rect x="8" y="1" width="5" height="4" rx="1"/><rect x="1" y="7" width="5" height="4" rx="1"/><rect x="8" y="7" width="5" height="4" rx="1"/></svg>
<svg class="a" style="left:1103px;top:807px" width="14" height="12" viewBox="0 0 14 12" fill="none" stroke="#666" stroke-width="1"><path d="M1 1h5l1 1 1-1h5v10H8l-1 0.5-1-0.5H1zM7 2v9M3 4h2M3 6h2M9 4h2M9 6h2"/></svg>
<svg class="a" style="left:1139px;top:806px" width="12" height="14" viewBox="0 0 12 14" fill="none" stroke="#666" stroke-width="1"><path d="M1 1h10M2 1v7h8V1M6 8v4M3 13h6M4 3h4"/></svg>
<div class="a" style="left:1170px;top:812.5px;width:7px;height:1px;background:#666"></div>
<div class="a" style="left:1182px;top:812.5px;width:89px;height:1px;background:#888"></div>
<div class="a" style="left:1207px;top:808px;width:5px;height:10px;background:#555"></div>
<div class="a" style="left:1227px;top:810.5px;width:1px;height:5px;background:#666"></div>
<div class="t" style="left:1275.5px;top:807px;font-size:11px;color:#555">+</div>
<div class="t" style="left:1295.4px;top:810.5px;font-size:10px;color:#555">64 %</div>
<svg class="a" style="left:1327px;top:806px" width="15" height="14" viewBox="0 0 15 14" fill="none" stroke="#666" stroke-width="1"><rect x="4" y="3" width="7" height="8"/><path d="M1 7l2-2v4zM14 7l-2-2v4zM7.5 0.5l-2 2h4zM7.5 13.5l-2-2h4z"/></svg>
<!-- Templafy pane -->
<div class="t" style="left:980px;top:209px;font-size:18.5px;color:#c24f30">Templafy</div>
<svg class="a" style="left:1282px;top:213px" width="10" height="6" viewBox="0 0 10 6"><path d="M0.5 0.5h9L5 5.5z" fill="#666"/></svg>
<svg class="a" style="left:1318px;top:210px" width="11" height="11" viewBox="0 0 11 11" fill="none" stroke="#444" stroke-width="1.3"><path d="M1 1l9 9M10 1l-9 9"/></svg>
<div class="a" style="left:975px;top:232px;width:364px;height:565px;background:#fff"></div>
<div class="a" style="left:975px;top:262px;width:364px;height:1px;background:#ececec"></div>
<div class="a" style="left:990px;top:241px;width:12px;height:12px;background:#0a6cf2;border-radius:2px 2px 4px 2px"></div>
<svg class="a" style="left:992.5px;top:243.5px" width="7" height="7" viewBox="0 0 7 7"><path d="M0.5 0.5h6v1.7H4.4V6.5H2.6V2.2H0.5z" fill="#fff"/></svg>
<div class="a" style="left:1322.5px;top:241px;width:2.5px;height:2.5px;background:#444;border-radius:50%"></div>
<div class="a" style="left:1322.5px;top:245.5px;width:2.5px;height:2.5px;background:#444;border-radius:50%"></div>
<div class="a" style="left:1322.5px;top:250px;width:2.5px;height:2.5px;background:#444;border-radius:50%"></div>
<svg class="a" style="left:995px;top:280px" width="22" height="17" viewBox="0 0 22 17"><rect x="0" y="0" width="22" height="17" rx="2" fill="#1f3b4d"/><circle cx="6" cy="8.5" r="3.2" fill="#9ab"/><path d="M11 7h3M11 10h3M15 7h3" stroke="#9ab" stroke-width="1.2"/></svg>
<svg class="a" style="left:1082px;top:278px" width="20" height="20" viewBox="0 0 20 20"><path d="M10 10V1a9 9 0 1 1-9 9z" fill="#1f3b4d"/><path d="M8.5 8.5V0.5a8 8 0 0 0-8 8z" fill="#9fb3ab"/></svg>
<svg class="a" style="left:1202px;top:278px" width="20" height="20" viewBox="0 0 20 20"><rect x="0" y="0" width="20" height="20" rx="2" fill="#1f3b4d"/><circle cx="6.5" cy="6.5" r="2.2" fill="#c8d4d8"/><path d="M2 17l5-6 3 3 3-4 5 7z" fill="#c8d4d8"/></svg>
<div class="t" style="left:988.7px;top:307.8px;font-size:12.5px;color:#666">Slides</div>
<div class="t" style="left:1051.6px;top:307.8px;font-size:12.5px;color:#666">Slide elements</div>
<div class="t" style="left:1162.6px;top:307.8px;font-size:12.5px;color:#1a1a1a;-webkit-text-stroke:0.35px #1a1a1a">Kontainer Images</div>
<div class="a" style="left:1162.6px;top:324.5px;width:99px;height:3px;background:#1a1a1a"></div>
<div class="a" style="left:989px;top:328px;width:335px;height:412px;border:1px solid #e3e3e3"></div>
<div class="a" style="left:989px;top:359px;width:335px;height:1px;background:#ececec"></div>
<div class="a" style="left:1021px;top:329px;width:1px;height:30px;background:#ececec"></div>
<div class="a" style="left:1047px;top:329px;width:1px;height:30px;background:#ececec"></div>
<svg class="a" style="left:999px;top:339px" width="11" height="11" viewBox="0 0 11 11" fill="none" stroke="#333" stroke-width="1.6"><circle cx="4.5" cy="4.5" r="3.3"/><path d="M7 7l3.3 3.3"/></svg>
<svg class="a" style="left:1028px;top:339px" width="11" height="10" viewBox="0 0 11 10" fill="none" stroke="#333" stroke-width="1.6"><path d="M10.5 5H2M5.5 1L1.5 5l4 4"/></svg>
<svg class="a" style="left:1060px;top:339px" width="11" height="10" viewBox="0 0 11 10"><path d="M5.5 0.5L0.5 5h1.5v4.5h2.5V6.5h2v3h2.5V5h1.5z" fill="#333"/></svg>
<svg class="a" style="left:1082px;top:340px" width="6" height="9" viewBox="0 0 6 9" fill="none" stroke="#444" stroke-width="1.4"><path d="M1 1l3.5 3.5L1 8"/></svg>
<div class="t" style="left:1098px;top:338px;font-size:12.5px;color:#5a5a5a">Demo Templafy</div>
<div class="a" style="left:990px;top:412px;width:333px;height:49px;background:#f7f7f7"></div>
<svg class="a" style="left:1002px;top:375px" width="23" height="19" viewBox="0 0 23 19"><path d="M0 1.5a1.5 1.5 0 0 1 1.5-1.5h6l2 2.5h12a1.5 1.5 0 0 1 1.5 1.5v13.5a1 1 0 0 1-1 1H1a1 1 0 0 1-1-1z" fill="#a9b3b6"/></svg>
<div class="t" style="left:1038.4px;top:378.8px;font-size:12.5px;color:#5a5a5a">Behind the Scenes</div>
<svg class="a" style="left:1294px;top:378px" width="10" height="14" viewBox="0 0 10 14" fill="none" stroke="#333" stroke-width="2"><path d="M2 1.5l6 5.5-6 5.5"/></svg>
<svg class="a" style="left:1002px;top:426px" width="23" height="19" viewBox="0 0 23 19"><path d="M0 1.5a1.5 1.5 0 0 1 1.5-1.5h6l2 2.5h12a1.5 1.5 0 0 1 1.5 1.5v13.5a1 1 0 0 1-1 1H1a1 1 0 0 1-1-1z" fill="#a9b3b6"/></svg>
<div class="t" style="left:1038.4px;top:429.8px;font-size:12.5px;color:#5a5a5a">Summer Campaign</div>
<svg class="a" style="left:1294px;top:428px" width="10" height="14" viewBox="0 0 10 14" fill="none" stroke="#333" stroke-width="2"><path d="M2 1.5l6 5.5-6 5.5"/></svg>
<svg class="a" style="left:1158px;top:441px" width="14" height="19" viewBox="0 0 14 19"><path d="M1 1v14l3.5-3.5 3 6 2-1-3-6h5z" fill="#fff" stroke="#333" stroke-width="1.1"/></svg>
<svg class="a" style="left:1002px;top:764px" width="11" height="11" viewBox="0 0 11 11" fill="none" stroke="#444" stroke-width="1.6"><path d="M5.5 0.5v10M0.5 5.5h10"/></svg>
<div class="t" style="left:1018.7px;top:761.5px;font-size:12.5px;color:#4a4a4a;-webkit-text-stroke:0.35px #4a4a4a">Start new presentation</div>

<svg class="a" style="left:1328px;top:184px" width="10" height="6" viewBox="0 0 10 6" fill="none" stroke="#555" stroke-width="1.1"><path d="M1 5l4-4 4 4"/></svg>
</div>

</body></html>
